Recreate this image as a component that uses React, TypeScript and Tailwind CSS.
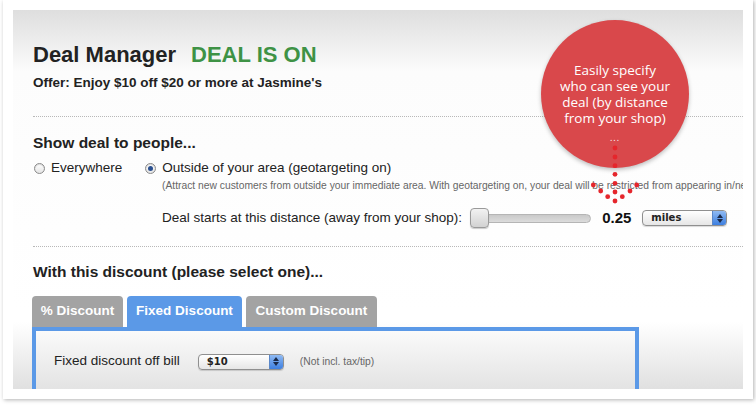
import React from "react"

function Radio({ checked }: { checked?: boolean }) {
  return (
    <span className="inline-flex items-center justify-center w-[11px] h-[11px] rounded-full border border-[#8a8a8a] bg-[linear-gradient(to_bottom,#ffffff,#e4e4e4)] shadow-[inset_0_1px_1px_rgba(0,0,0,0.15)]">
      {checked && <span className="w-[5px] h-[5px] rounded-full bg-[#2a4f8f]" />}
    </span>
  )
}

function AquaSelect({ label, width }: { label: string; width: string }) {
  return (
    <div
      className={`${width} h-[16px] flex items-stretch rounded-[4px] border border-[#8f8f8f] bg-[linear-gradient(to_bottom,#ffffff,#e6e6e6)] shadow-[0_1px_1px_rgba(0,0,0,0.15)] overflow-hidden`}
    >
      <span className="flex-1 pl-[8px] text-[10px] leading-[14px] font-bold text-[#222] font-['DejaVu_Sans',sans-serif]">
        {label}
      </span>
      <span className="w-[14px] flex flex-col items-center justify-center gap-[1px] bg-[linear-gradient(to_bottom,#8fbaf3,#3d7fe0)] border-l border-[#5a87c8]">
        <svg width="6" height="4" viewBox="0 0 6 4"><path d="M3 0 L6 4 L0 4 Z" fill="#1a2a4a" /></svg>
        <svg width="6" height="4" viewBox="0 0 6 4"><path d="M0 0 L6 0 L3 4 Z" fill="#1a2a4a" /></svg>
      </span>
    </div>
  )
}

export default function App() {
  const tabs = [
    { label: "% Discount", w: "w-[91px]", active: false },
    { label: "Fixed Discount", w: "w-[115px]", active: true },
    { label: "Custom Discount", w: "w-[131px]", active: false },
  ]

  // dotted arrow under the callout, coordinates relative to the inner panel
  const dots = [
    [602, 138], [602, 147], [602, 155.7], [602, 164.3], [602, 173.3], [602, 182], [602, 191],
    [580.3, 175], [587.7, 181], [594.7, 186.7],
    [623.7, 175], [617, 181], [609.3, 186.7],
  ]

  return (
    <div className="w-[756px] h-[407px] bg-white overflow-hidden font-['Liberation_Sans',Arial,sans-serif]">
      <div className="ml-[3px] w-[750px] h-[399px] bg-white p-[10px] shadow-[1px_1px_4px_rgba(0,0,0,0.3)]">
        <div className="relative h-[379px] overflow-hidden pl-5 text-[#222] bg-[linear-gradient(to_bottom,#dedede_0px,#fcfcfc_62px,#ffffff_300px,#ffffff_312px,#e0e0e0_379px)]">
          {/* header */}
          <div className="pt-[33px] flex items-baseline gap-[15px] text-[22px] leading-6 font-bold">
            <span>Deal Manager</span>
            <span className="text-[#3e9245]">DEAL IS ON</span>
          </div>
          <div className="mt-[7px] text-[13.5px] leading-[18px] font-bold">
            Offer: Enjoy $10 off $20 or more at Jasmine's
          </div>

          <div className="mt-[24px] border-t border-dotted border-[#b8b8b8]" />

          {/* audience */}
          <div className="mt-[16px] text-[15.5px] leading-5 font-bold">Show deal to people...</div>
          <div className="mt-[6px] flex items-center text-[13.5px] leading-[18px] whitespace-nowrap">
            <span className="flex items-center gap-[6px] ml-[1px]">
              <Radio />
              Everywhere
            </span>
            <span className="flex items-center gap-[6px] ml-[23px]">
              <Radio checked />
              Outside of your area (geotargeting on)
            </span>
          </div>
          <div className="mt-[2px] pl-[129px] text-[10.3px] leading-[14px] text-[#666] whitespace-nowrap">
            (Attract new customers from outside your immediate area. With geotargeting on, your deal will be restricted from appearing in/near your immediate area.)
          </div>
          <div className="mt-[14px] pl-[129px] flex items-center text-[13.5px] whitespace-nowrap">
            <span>Deal starts at this distance (away from your shop):</span>
            <div className="relative ml-[8px] w-[121px] h-[20px] flex items-center">
              <div className="w-full h-[9px] rounded-[5px] border border-[#b5b5b5] bg-[linear-gradient(to_bottom,#c9c9c9,#dcdcdc)]" />
              <div className="absolute left-0 top-0 w-[19px] h-[20px] rounded-[4px] border border-[#9a9a9a] bg-[linear-gradient(to_bottom,#f2f2f2,#d2d2d2)] shadow-[0_1px_1px_rgba(0,0,0,0.2)]" />
            </div>
            <span className="ml-[11px] font-bold text-[15px] text-[#111]">0.25</span>
            <div className="ml-[11px]">
              <AquaSelect label="miles" width="w-[85px]" />
            </div>
          </div>

          <div className="mt-[16px] border-t border-dotted border-[#b8b8b8]" />

          {/* discount */}
          <div className="mt-[15px] text-[15.5px] leading-5 font-bold">With this discount (please select one)...</div>
          <div className="mt-[14px] ml-[-1px] flex items-end gap-[4px]">
            {tabs.map((t) => (
              <div
                key={t.label}
                className={`${t.w} h-[31px] rounded-t-[4px] flex items-center justify-center text-[13.5px] font-bold text-white ${
                  t.active ? "bg-[#5b99e7]" : "bg-[#a3a3a3]"
                }`}
              >
                {t.label}
              </div>
            ))}
          </div>
          <div className="ml-[-1px] w-[607px] h-[80px] border-[4px] border-b-0 border-[#5b99e7] bg-[linear-gradient(to_bottom,#fafafa,#e3e3e3_58px)] pl-[18px] pt-[23px]">
            <div className="flex items-center whitespace-nowrap h-[16px]">
              <span className="text-[13.5px]">Fixed discount off bill</span>
              <div className="ml-[18px]">
                <AquaSelect label="$10" width="w-[86px]" />
              </div>
              <span className="ml-[16px] text-[10.3px] text-[#666]">(Not incl. tax/tip)</span>
            </div>
          </div>

          {/* callout bubble */}
          <div className="absolute left-[528px] top-[10px] w-[148px] h-[148px] rounded-full bg-[#d9484b] shadow-[0_2px_4px_rgba(0,0,0,0.25)] flex flex-col items-center pt-[42px] text-white font-['Open_Sans',sans-serif] text-[13.5px] leading-[16px] text-center">
            <span>Easily specify</span>
            <span>who can see your</span>
            <span>deal (by distance</span>
            <span>from your shop)</span>
            <span className="mt-[7px] text-[9px] leading-[10px] tracking-[1px]">...</span>
          </div>

          {/* dotted arrow */}
          <svg className="absolute left-[575px] top-[130px]" width="60" height="70" viewBox="575 130 60 70">
            {dots.map(([x, y]) => (
              <circle key={`${x}-${y}`} cx={x} cy={y} r={2.4} fill="#e5262c" />
            ))}
          </svg>
        </div>
      </div>
    </div>
  )
}
